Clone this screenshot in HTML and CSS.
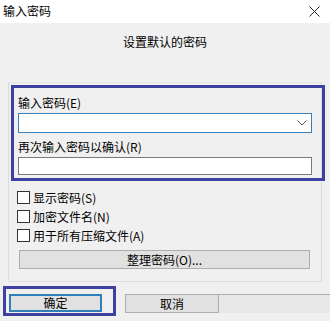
FILE: index.html
```html
<!DOCTYPE html>
<html lang="zh-CN">
<head>
  <meta charset="UTF-8" />
  <title>输入密码</title>
  <link rel="stylesheet" href="styles.css">
</head>
<body>
  <div class="window">
    <div class="titlebar">
      <span class="title">输入密码</span>
      <svg class="close" width="11" height="11" viewBox="0 0 11 11">
        <path d="M0.5 0.5 L10.5 10.5 M10.5 0.5 L0.5 10.5" stroke="#222" stroke-width="1" fill="none"/>
      </svg>
    </div>

    <div class="main">
      <div class="heading">设置默认的密码</div>

      <div class="group">
        <div class="pwbox">
          <label class="lbl">输入密码(E)</label>
          <div class="combo">
            <svg class="chevron" width="10" height="6" viewBox="0 0 10 6">
              <path d="M0.5 0.5 L5 5 L9.5 0.5" stroke="#555" stroke-width="1" fill="none"/>
            </svg>
          </div>
          <label class="lbl lbl2">再次输入密码以确认(R)</label>
          <div class="field"></div>
        </div>

        <div class="checks">
          <div class="check"><span class="box"></span>显示密码(S)</div>
          <div class="check"><span class="box"></span>加密文件名(N)</div>
          <div class="check"><span class="box"></span>用于所有压缩文件(A)</div>
        </div>

        <div class="btn organize">整理密码(O)...</div>
      </div>

      <div class="footer">
        <div class="okbox">
          <div class="btn ok">确定</div>
        </div>
        <div class="btn cancel">取消</div>
      </div>
    </div>
  </div>
</body>
</html>
```

FILE: styles.css
```css
body {
  margin: 0;
  font-family: "Noto Sans CJK SC", "Liberation Sans", sans-serif;
  font-size: 12px;
  color: #000;
  background: #f0f0f0;
}

.window {
  width: 330px;
  height: 321px;
  overflow: hidden;
}

.titlebar {
  height: 23px;
  background: #fff;
  display: flex;
  align-items: center;
  justify-content: space-between;
  padding: 0 10px 0 3px;
}

.title {
  line-height: 16px;
  margin-top: -2px;
}

.main {
  background: #f0f0f0;
  height: 298px;
}

.heading {
  text-align: center;
  padding-top: 11px;
  line-height: 16px;
  height: 48px;
}

.group {
  margin-left: 8px;
  width: 312px;
  border: 1px solid #dcdcdc;
  border-top-color: #e6e6e6;
  padding-bottom: 12px;
}

.pwbox {
  margin-left: 2px;
  margin-top: 2px;
  width: 294px;
  border: 3px solid #3d41a0;
  padding: 7px 10px 3px 4px;
}

.lbl {
  display: block;
  line-height: 16px;
}

.lbl2 {
  margin-top: 6px;
}

.combo {
  margin-top: 2px;
  height: 18px;
  background: #fff;
  border: 1px solid #3a80b8;
  display: flex;
  align-items: center;
  justify-content: flex-end;
  padding-right: 4px;
}

.field {
  margin-top: 2px;
  height: 16px;
  background: #fff;
  border: 1px solid #7a7a7a;
}

.checks {
  margin-top: 7px;
  padding-left: 8px;
}

.check {
  display: flex;
  align-items: center;
  height: 19px;
}

.box {
  width: 11px;
  height: 11px;
  border: 1px solid #333;
  background: #fff;
  margin-right: 3px;
}

.btn {
  background: #e1e1e1;
  border: 1px solid #adadad;
  text-align: center;
  line-height: 17px;
  height: 17px;
}

.organize {
  margin: 5px 0 0 10px;
  width: 289px;
}

.footer {
  display: flex;
  align-items: flex-start;
  margin-top: 4px;
}

.okbox {
  margin-left: 3px;
  width: 100px;
  border: 3px solid #3d41a0;
  padding: 5px 4px 1px 3px;
}

.ok {
  width: 89px;
  height: 14px;
  line-height: 14px;
  border: 2px solid #2f7fb8;
}

.cancel {
  margin-top: 8px;
  margin-left: 9px;
  width: 92px;
  position: relative;
}

.cancel::after {
  content: "";
  position: absolute;
  left: 93px;
  right: -114px;
  top: -1px;
  height: 17px;
  border-top: 1px solid #adadad;
  border-bottom: 1px solid #e6e6e6;
  background: #e8e8e8;
}
```
